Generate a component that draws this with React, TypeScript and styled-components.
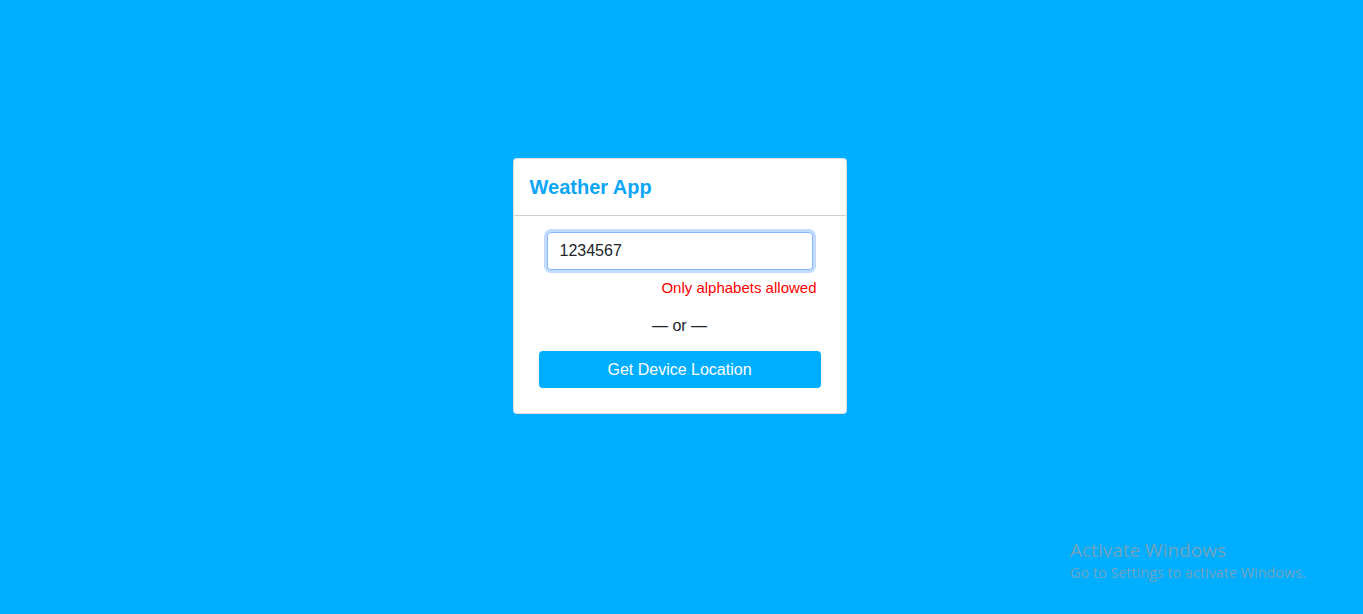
import React, { useState } from 'react';
import styled, { createGlobalStyle } from 'styled-components';

const GlobalStyle = createGlobalStyle`
  html, body {
    margin: 0;
    padding: 0;
    background: #00aeff;
    font-family: "Liberation Sans", Arial, sans-serif;
  }
`;

const Page = styled.div`
  min-height: 614px;
  display: flex;
  flex-direction: column;
  align-items: center;
  padding-top: 158px;
  box-sizing: border-box;
  position: relative;
  overflow: hidden;
`;

const Card = styled.div`
  width: 334px;
  background: #fff;
  border: 1px solid rgba(0, 0, 0, 0.125);
  border-radius: 4px;
  box-sizing: border-box;
  margin-left: -4px;
`;

const CardHeader = styled.div`
  padding: 16px;
  border-bottom: 1px solid #cfcfcf;
`;

const Title = styled.h1`
  margin: 0;
  font-size: 20px;
  line-height: 24px;
  font-weight: bold;
  color: #0ba6f5;
`;

const CardBody = styled.div`
  padding: 16px 25px 25px;
  display: flex;
  flex-direction: column;
  align-items: center;
`;

const CityInput = styled.input`
  width: 266px;
  height: 38px;
  box-sizing: border-box;
  padding: 0 12px;
  font-family: "Liberation Sans", Arial, sans-serif;
  font-size: 16px;
  color: #212529;
  border: 1px solid #86b7fe;
  border-radius: 4px;
  box-shadow: 0 0 0 3px rgba(13, 110, 253, 0.25);
  outline: none;
  caret-color: #000;
`;

const ErrorText = styled.div`
  align-self: stretch;
  text-align: right;
  color: #ff0000;
  font-size: 15px;
  line-height: 18px;
  margin-top: 9px;
  padding-right: 4px;
`;

const Divider = styled.div`
  margin-top: 20px;
  font-size: 16px;
  line-height: 18px;
  color: #212529;
`;

const LocationButton = styled.button`
  margin-top: 16px;
  width: 282px;
  height: 37px;
  border: none;
  border-radius: 4px;
  background: #00aeff;
  color: #fff;
  font-family: "Liberation Sans", Arial, sans-serif;
  font-size: 16px;
  cursor: pointer;
`;

const Watermark = styled.div`
  position: absolute;
  left: 1070px;
  top: 539px;
  color: rgba(130, 160, 180, 0.9);
  font-family: "Open Sans", "Noto Sans", sans-serif;
`;

const WatermarkTitle = styled.div`
  font-size: 19px;
  line-height: 23px;
`;

const WatermarkSub = styled.div`
  font-size: 14.4px;
  line-height: 21px;
`;

const App: React.FC = () => {
  const [city, setCity] = useState('1234567');
  const invalid = /[^a-zA-Z\s]/.test(city);

  return (
    <>
      <GlobalStyle />
      <Page>
        <Card>
          <CardHeader>
            <Title>Weather App</Title>
          </CardHeader>
          <CardBody>
            <CityInput autoFocus value={city} onChange={(e) => setCity(e.target.value)} />
            {invalid && <ErrorText>Only alphabets allowed</ErrorText>}
            <Divider>— or —</Divider>
            <LocationButton>Get Device Location</LocationButton>
          </CardBody>
        </Card>
        <Watermark>
          <WatermarkTitle>Activate Windows</WatermarkTitle>
          <WatermarkSub>Go to Settings to activate Windows.</WatermarkSub>
        </Watermark>
      </Page>
    </>
  );
};

export default App;
